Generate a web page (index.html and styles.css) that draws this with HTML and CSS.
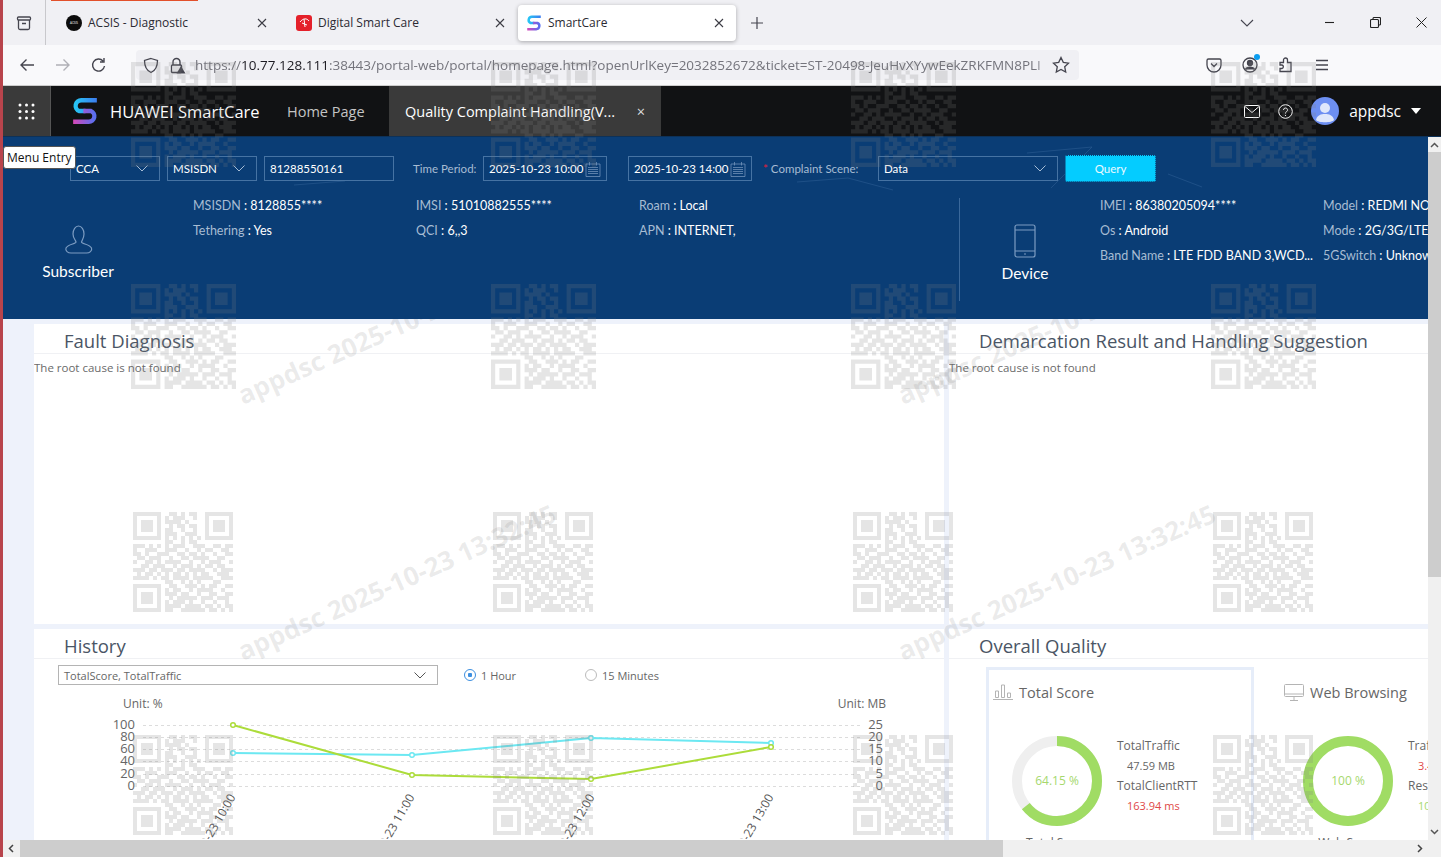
FILE: index.html
```html
<!DOCTYPE html>
<html lang="en">
<head>
    <meta charset="UTF-8">
    <meta name="viewport" content="width=device-width, initial-scale=1.0">
    <title>SmartCare</title>
    <link rel="stylesheet" href="styles.css">
</head>
<body>
<svg width="0" height="0" class="defs">
    <defs>
        <linearGradient id="logoTop" x1="0" y1="0" x2="1" y2="0"><stop offset="0" stop-color="#27c4f5"/><stop offset="1" stop-color="#3d7cf0"/></linearGradient>
        <linearGradient id="logoBottom" x1="0" y1="0" x2="1" y2="0"><stop offset="0" stop-color="#d648b8"/><stop offset="1" stop-color="#5a6ff0"/></linearGradient>
        <symbol id="logo" viewBox="0 0 26 26">
            <path d="M24 3H9.500a5.200 5.200 0 0 0-2 10l6 0" fill="none" stroke="url(#logoTop)" stroke-width="4"/>
            <path d="M2 23H16.500a5.200 5.200 0 0 0 2-10l-7 0" fill="none" stroke="url(#logoBottom)" stroke-width="4"/>
        </symbol>
        <symbol id="qr" viewBox="0 0 25 25">
            <path fill-rule="evenodd" d="M0 0h7v7H0zM1 1v5h5V1zM2 2h3v3H2zM18 0h7v7h-7zM19 1v5h5V1zM20 2h3v3h-3zM0 18h7v7H0zM1 19v5h5v-5zM2 20h3v3H2z"/>
            <path fill="none" stroke="#808080" stroke-width="1" d="M9 .5h2m1 0h1m1 0h2M8 1.500h1m1 0h3m2 0h1M8 2.500h4m1 0h1M9 3.500h1m1 0h2m1 0h2M8 4.500h2m2 0h1m2 0h1M8 5.500h3m2 0h3M8 6.500h1m1 0h1m1 0h1m1 0h1m1 0h1M8 7.500h2m2 0h1m1 0h2M0 8.500h3m1 0h1m1 0h1m1 0h1m1 0h3m2 0h3m2 0h2m1 0h2M0 9.500h1m2 0h3m2 0h3m2 0h1m2 0h1m1 0h2m2 0h2M0 10.500h2m1 0h1m2 0h3m2 0h2m1 0h2m1 0h1m2 0h1m2 0h2M1 11.500h2m1 0h3m2 0h1m2 0h2m1 0h4m2 0h2M0 12.500h1m2 0h2m1 0h1m1 0h4m2 0h1m2 0h1m1 0h3m2 0h1M2 13.500h2m1 0h3m2 0h1m1 0h3m1 0h1m1 0h2m1 0h2M0 14.500h3m1 0h2m1 0h3m1 0h2m1 0h4m2 0h1m1 0h3M1 15.500h1m1 0h2m1 0h1m1 0h1m1 0h2m1 0h1m1 0h1m1 0h2m2 0h3M0 16.500h4m1 0h1m1 0h2m1 0h4m1 0h5m2 0h3M8 17.500h2m2 0h1m1 0h1m1 0h1m3 0h2M9 18.500h2m2 0h3m1 0h1m1 0h2m2 0h2M8 19.500h1m1 0h2m2 0h1m1 0h4m2 0h1M8 20.500h3m1 0h2m2 0h1m2 0h2m2 0h2M9 21.500h1m1 0h5m1 0h3m1 0h3M8 22.500h1m1 0h3m1 0h1m2 0h1m2 0h1m2 0h1M8 23.500h4m1 0h4m1 0h2m1 0h1m1 0h2M8 24.500h2m2 0h6m1 0h2m1 0h1m1 0h1"/>
        </symbol>
    </defs>
</svg>

<div class="window">
    <!-- browser tabs -->
    <div class="tabbar">
        <span class="tab-loading"></span>
        <div class="tab-view">
            <svg width="16" height="16" viewBox="0 0 16 16" fill="none" stroke="#45454f" stroke-width="1.300"><rect x="1.500" y="2" width="13" height="3" rx="1"/><path d="M2.500 5v8a1.500 1.500 0 0 0 1.500 1.500h8a1.500 1.500 0 0 0 1.500-1.500V5M6 8.500h4"/></svg>
        </div>
        <div class="tab tab-first">
            <span class="tab-icon acsis">ACSIS</span>
            <span class="tab-title">ACSIS - Diagnostic</span>
            <svg class="tab-close" width="10" height="10" viewBox="0 0 10 10"><path d="M1 1l8 8M9 1l-8 8" stroke="#3c3c44" stroke-width="1.100"/></svg>
        </div>
        <div class="tab">
            <span class="tab-icon dsc"><svg width="11" height="11" viewBox="0 0 11 11" fill="none" stroke="#fff"><path d="M1 5c3-4 7-4 9-1M5 2l1 8M3 6l5 2"/></svg></span>
            <span class="tab-title">Digital Smart Care</span>
            <svg class="tab-close" width="10" height="10" viewBox="0 0 10 10"><path d="M1 1l8 8M9 1l-8 8" stroke="#3c3c44" stroke-width="1.100"/></svg>
        </div>
        <div class="tab tab-active">
            <svg class="tab-icon" width="16" height="16"><use href="#logo"/></svg>
            <span class="tab-title">SmartCare</span>
            <svg class="tab-close" width="10" height="10" viewBox="0 0 10 10"><path d="M1 1l8 8M9 1l-8 8" stroke="#3c3c44" stroke-width="1.100"/></svg>
        </div>
        <svg class="tab-new" width="14" height="14" viewBox="0 0 14 14"><path d="M7 1v12M1 7h12" stroke="#45454f" stroke-width="1.200"/></svg>
        <div class="window-btns">
            <svg class="tab-list" width="14" height="8" viewBox="0 0 14 8" fill="none"><path d="M1 1l6 6 6-6" stroke="#45454f" stroke-width="1.100"/></svg>
            <svg class="win-btn" width="11" height="11" viewBox="0 0 11 11"><path d="M1 5.500h9" stroke="#222" stroke-width="1.100"/></svg>
            <svg class="win-btn" width="11" height="11" viewBox="0 0 11 11" fill="none" stroke="#222" stroke-width="1.100"><rect x=".5" y="2.500" width="8" height="8" rx="1"/><path d="M3 2.500V1.500a1 1 0 0 1 1-1h5.500a1 1 0 0 1 1 1V7a1 1 0 0 1-1 1h-1"/></svg>
            <svg class="win-btn" width="11" height="11" viewBox="0 0 11 11"><path d="M.5.500l10 10M10.500.500l-10 10" stroke="#222" stroke-width="1"/></svg>
        </div>
    </div>

    <!-- address bar -->
    <div class="navbar">
        <svg class="nav-icon" width="16" height="16" viewBox="0 0 16 16" fill="none" stroke="#45454f" stroke-width="1.400"><path d="M15 8H2M7.500 2.500L2 8l5.500 5.500"/></svg>
        <svg class="nav-icon" width="16" height="16" viewBox="0 0 16 16" fill="none" stroke="#b0b0b6" stroke-width="1.400"><path d="M1 8h13M8.500 2.500L14 8l-5.500 5.500"/></svg>
        <svg class="nav-icon" width="16" height="16" viewBox="0 0 16 16" fill="none" stroke="#45454f" stroke-width="1.400"><path d="M13.500 9a6 6 0 1 1-1.500-5M13 1v4H9"/></svg>
        <div class="urlbar">
            <svg width="16" height="17" viewBox="0 0 16 17" fill="none" stroke="#45454f" stroke-width="1.300"><path d="M8 1.500L14.500 3.500c0 6-2 10-6.500 12C3.500 13.500 1.500 9.500 1.500 3.500z"/></svg>
            <svg class="url-lock" width="17" height="17" viewBox="0 0 17 17"><path d="M4 8V5a3.500 3.500 0 0 1 7 0v3" fill="none" stroke="#45454f" stroke-width="1.400"/><rect x="2.500" y="8" width="10" height="7.500" rx="1" fill="none" stroke="#45454f" stroke-width="1.400"/><path d="M12 9l4.500 7.500h-9z" fill="#45454f"/></svg>
            <span class="url-text">https://<b>10.77.128.111</b>:38443/portal-web/portal/homepage.html?openUrlKey=2032852672&amp;ticket=ST-20498-JeuHvXYywEekZRKFMN8PLI</span>
            <svg width="18" height="18" viewBox="0 0 18 18" fill="none" stroke="#45454f" stroke-width="1.300"><path d="M9 1.500l2.300 4.900 5.200.700-3.800 3.600 1 5.300L9 13.400l-4.700 2.600 1-5.300L1.500 7.100l5.200-.7z"/></svg>
        </div>
        <div class="nav-right">
            <svg width="16" height="16" viewBox="0 0 16 16" fill="none" stroke="#45454f" stroke-width="1.300"><path d="M2.500 2h11A1.500 1.500 0 0 1 15 3.500V8a7 7 0 0 1-14 0V3.500A1.500 1.500 0 0 1 2.500 2zM5 6.500l3 3 3-3"/></svg>
            <span class="nav-account">
                <svg width="16" height="16" viewBox="0 0 16 16" fill="none" stroke="#45454f" stroke-width="1.300"><circle cx="8" cy="8" r="7"/><circle cx="8" cy="6" r="2.500" fill="#45454f"/><path d="M3.500 12.500c1-3 8-3 9 0" fill="#45454f"/></svg>
                <i class="account-dot"></i>
            </span>
            <svg width="16" height="16" viewBox="0 0 16 16" fill="none" stroke="#45454f" stroke-width="1.300"><path d="M2 5.500h3.500V3a2 2 0 0 1 4 0v2.500H13v9H2v-3h2a1.800 1.800 0 0 0 0-3.500H2z"/></svg>
            <svg width="16" height="16" viewBox="0 0 16 16" fill="none" stroke="#45454f" stroke-width="1.300"><path d="M2 3.500h12M2 8h12M2 12.500h12"/></svg>
        </div>
    </div>

    <!-- portal header -->
    <div class="app-header">
        <div class="grid-btn">
            <svg width="17" height="17" viewBox="0 0 17 17" fill="#fff"><circle cx="2" cy="2" r="1.500"/><circle cx="8.500" cy="2" r="1.500"/><circle cx="15" cy="2" r="1.500"/><circle cx="2" cy="8.500" r="1.500"/><circle cx="8.500" cy="8.500" r="1.500"/><circle cx="15" cy="8.500" r="1.500"/><circle cx="2" cy="15" r="1.500"/><circle cx="8.500" cy="15" r="1.500"/><circle cx="15" cy="15" r="1.500"/></svg>
        </div>
        <svg class="app-logo" width="28" height="28"><use href="#logo"/></svg>
        <span class="app-name">HUAWEI SmartCare</span>
        <span class="app-home">Home Page</span>
        <div class="app-tab">
            <span>Quality Complaint Handling(V...</span>
            <span class="app-tab-close">×</span>
        </div>
        <div class="app-user">
            <svg width="16" height="13" viewBox="0 0 16 13" fill="none" stroke="#fff"><rect x=".5" y=".5" width="15" height="12" rx="1"/><path d="M1 1.500l7 6 7-6"/></svg>
            <svg width="15" height="15" viewBox="0 0 15 15" fill="none" stroke="#fff"><circle cx="7.500" cy="7.500" r="6.800"/><path d="M5.500 6a2 2 0 1 1 3 1.700c-.7.500-1 .8-1 1.800M7.500 11v1"/></svg>
            <span class="avatar">
                <svg width="28" height="28" viewBox="0 0 28 28" fill="#dfe7fb"><circle cx="14" cy="11" r="5"/><path d="M5 23c1-5 5-6 9-6s8 1 9 6c-2 3-16 3-18 0z"/></svg>
            </span>
            <span class="user-name">appdsc</span>
            <span class="user-caret"></span>
        </div>
    </div>

    <div class="main">
        <div class="page">
            <!-- subscriber and device summary -->
            <div class="summary">
                <svg class="summary-bg" width="1425" height="60" viewBox="0 0 1425 60" fill="none" stroke="#2c5d92" stroke-width=".6">
                    <path d="M794 45l51-4 45 12M291 48l51-4M1024 16l65-6-41 41M1165 37l34 13"/>
                </svg>
                <form class="query-row">
                    <span class="req req-first">*</span>
                    <div class="field select w-cca">CCA<svg class="chev" width="12" height="7" viewBox="0 0 12 7" fill="none"><path d="M.5.500L6 6l5.500-5.500"/></svg></div>
                    <div class="field select w-cca">MSISDN<svg class="chev" width="12" height="7" viewBox="0 0 12 7" fill="none"><path d="M.5.500L6 6l5.500-5.500"/></svg></div>
                    <div class="field w-num">81288550161</div>
                    <label class="query-label time-label">Time Period:</label>
                    <div class="field select w-date">2025-10-23 10:00<svg class="cal" width="16" height="16" viewBox="0 0 16 16" fill="none"><path d="M1 3h14v12.500H1zM4.500 1v3.500M11.500 1v3.500M3 6.500h10M3 8.500h10M3 10.500h10M3 12.500h10" stroke-dasharray="none"/></svg></div>
                    <div class="field select w-date date-second">2025-10-23 14:00<svg class="cal" width="16" height="16" viewBox="0 0 16 16" fill="none"><path d="M1 3h14v12.500H1zM4.500 1v3.500M11.500 1v3.500M3 6.500h10M3 8.500h10M3 10.500h10M3 12.500h10"/></svg></div>
                    <label class="query-label scene-label"><span class="req">*</span> Complaint Scene:</label>
                    <div class="field select w-scene">Data<svg class="chev" width="12" height="7" viewBox="0 0 12 7" fill="none"><path d="M.5.500L6 6l5.500-5.500"/></svg></div>
                    <button type="button" class="query-btn">Query</button>
                </form>

                <div class="info-row">
                    <div class="info-block subscriber">
                        <div class="info-head head-sub">
                            <svg width="32" height="32" viewBox="0 0 32 32" fill="none" stroke="#7c9cc2" stroke-width="1.200"><path d="M11 10a5.500 8 0 0 1 11 0c0 4-2 6-2.500 8 0 2 8 2 10 6 1 3-2 5-5 5H9c-3 0-6-2-5-5 2-4 10-4 10-6-.500-2-3-4-3-8z"/></svg>
                            <span>Subscriber</span>
                        </div>
                        <div class="info-grid">
                            <p><em>MSISDN</em> : 8128855****</p><p><em>IMSI</em> : 51010882555****</p><p><em>Roam</em> : Local</p>
                            <p><em>Tethering</em> : Yes</p><p><em>QCI</em> : 6,,3</p><p><em>APN</em> : INTERNET,</p>
                        </div>
                    </div>
                    <div class="info-block device">
                        <div class="info-head head-dev">
                            <svg width="22" height="34" viewBox="0 0 22 34" fill="none" stroke="#7c9cc2" stroke-width="1.200"><rect x="1" y="1" width="20" height="32" rx="2"/><path d="M1 6h20M1 27h20M10 30h2"/></svg>
                            <span>Device</span>
                        </div>
                        <div class="info-grid">
                            <p><em>IMEI</em> : 86380205094****</p><p><em>Model</em> : REDMI NOTE 13</p>
                            <p><em>Os</em> : Android</p><p><em>Mode</em> : 2G/3G/LTE</p>
                            <p><em>Band Name</em> : LTE FDD BAND 3,WCD...</p><p><em>5GSwitch</em> : Unknown</p>
                        </div>
                    </div>
                </div>
            </div>

            <!-- panels -->
            <div class="content">
                <div class="panels">
                    <section class="panel panel-top">
                        <h2>Fault Diagnosis</h2>
                        <p class="no-cause">The root cause is not found</p>
                    </section>
                    <section class="panel panel-top">
                        <h2>Demarcation Result and Handling Suggestion</h2>
                        <p class="no-cause">The root cause is not found</p>
                    </section>
                    <section class="panel">
                        <h2>History</h2>
                        <div class="history-tools">
                            <div class="history-select">TotalScore, TotalTraffic<svg width="12" height="7" viewBox="0 0 12 7" fill="none" stroke="#555"><path d="M.5.500L6 6l5.500-5.500"/></svg></div>
                            <label class="radio radio-on"><i></i>1 Hour</label>
                            <label class="radio"><i></i>15 Minutes</label>
                        </div>
                        <svg class="chart" width="910" height="160" viewBox="34 680 910 160">
                            <g class="chart-unit"><text x="123" y="709">Unit: %</text><text x="886" y="709" text-anchor="end">Unit: MB</text></g>
                            <g class="chart-grid">
                                <path d="M143 726.500h717M143 738.500h717M143 750.500h717M143 762.500h717M143 775.500h717M143 787.500h717"/>
                            </g>
                            <g class="chart-ticks" text-anchor="end">
                                <text x="135" y="730">100</text><text x="135" y="742">80</text><text x="135" y="754">60</text><text x="135" y="766">40</text><text x="135" y="779">20</text><text x="135" y="791">0</text>
                            </g>
                            <g class="chart-ticks" text-anchor="end">
                                <text x="883" y="730">25</text><text x="883" y="742">20</text><text x="883" y="754">15</text><text x="883" y="766">10</text><text x="883" y="779">5</text><text x="883" y="791">0</text>
                            </g>
                            <polyline class="line-cyan" points="233,754 412,756 591,739 771,744"/>
                            <polyline class="line-green" points="233,726 412,776 591,780 771,748"/>
                            <g class="dots-cyan"><circle cx="233" cy="754" r="2.300"/><circle cx="412" cy="756" r="2.300"/><circle cx="591" cy="739" r="2.300"/><circle cx="771" cy="744" r="2.300"/></g>
                            <g class="dots-green"><circle cx="233" cy="726" r="2.300"/><circle cx="412" cy="776" r="2.300"/><circle cx="591" cy="780" r="2.300"/><circle cx="771" cy="748" r="2.300"/></g>
                            <g class="chart-x" text-anchor="end">
                                <text transform="translate(236 798) rotate(-60)">2025-10-23 10:00</text>
                                <text transform="translate(415 798) rotate(-60)">2025-10-23 11:00</text>
                                <text transform="translate(595 798) rotate(-60)">2025-10-23 12:00</text>
                                <text transform="translate(774 798) rotate(-60)">2025-10-23 13:00</text>
                            </g>
                        </svg>
                    </section>
                    <section class="panel">
                        <h2>Overall Quality</h2>
                        <div class="quality-row">
                            <div class="quality-card card-active">
                                <div class="quality-title">
                                    <svg width="20" height="16" viewBox="0 0 20 16" fill="none" stroke="#b4b4b4"><path d="M0 15.500h20M2.500 7h3v6.500h-3zM8.500 1h3v12.500h-3zM14.500 9h3v4.500h-3z"/></svg>
                                    Total Score
                                </div>
                                <div class="quality-body">
                                    <div class="donut-wrap">
                                        <svg width="90" height="90" viewBox="0 0 90 90" fill="none"><circle cx="45" cy="45" r="40" stroke="#efefef" stroke-width="10"/><circle cx="45" cy="45" r="40" stroke="#a0dc64" stroke-width="10" stroke-dasharray="161.200 251.300" transform="rotate(-90 45 45)"/></svg>
                                        <span class="donut-value">64.15 %</span>
                                        <span class="donut-name">Total Score</span>
                                    </div>
                                    <div class="metrics">
                                        <p>TotalTraffic</p><p class="metric-val">47.59 MB</p>
                                        <p>TotalClientRTT</p><p class="metric-val metric-bad">163.94 ms</p>
                                    </div>
                                </div>
                            </div>
                            <div class="quality-card">
                                <div class="quality-title">
                                    <svg width="20" height="17" viewBox="0 0 20 17" fill="none" stroke="#b4b4b4"><rect x=".5" y=".5" width="19" height="12" rx="1"/><path d="M.5 10h19M10 13v3M6 16.500h8"/></svg>
                                    Web Browsing
                                </div>
                                <div class="quality-body">
                                    <div class="donut-wrap">
                                        <svg width="90" height="90" viewBox="0 0 90 90" fill="none"><circle cx="45" cy="45" r="40" stroke="#a0dc64" stroke-width="10"/></svg>
                                        <span class="donut-value">100 %</span>
                                        <span class="donut-name">Web Score</span>
                                    </div>
                                    <div class="metrics">
                                        <p>Traffic</p><p class="metric-val metric-bad">3.41 MB</p>
                                        <p>Response</p><p class="metric-val metric-good">10 ms</p>
                                    </div>
                                </div>
                            </div>
                        </div>
                    </section>
                </div>
                <svg class="stamp" width="1425" height="520" viewBox="0 320 1425 520">
                    <text transform="translate(240 406) rotate(-24)">appdsc 2025-10-23 13:32:45</text>
                    <text transform="translate(900 406) rotate(-24)">appdsc 2025-10-23 13:32:45</text>
                    <text transform="translate(240 662) rotate(-24)">appdsc 2025-10-23 13:32:45</text>
                    <text transform="translate(900 662) rotate(-24)">appdsc 2025-10-23 13:32:45</text>
                </svg>
            </div>
        </div>
        <div class="vscroll">
            <svg width="9" height="6" viewBox="0 0 9 6" fill="none"><path d="M1 5l3.500-3.500L8 5" stroke="#555" stroke-width="1.500"/></svg>
            <div class="vthumb"></div>
            <svg width="9" height="6" viewBox="0 0 9 6" fill="none"><path d="M1 1l3.500 3.500L8 1" stroke="#555" stroke-width="1.500"/></svg>
        </div>
    </div>
    <div class="hscroll">
        <svg width="6" height="9" viewBox="0 0 6 9" fill="none"><path d="M5 1L1.500 4.500 5 8" stroke="#444" stroke-width="1.500"/></svg>
        <div class="hthumb"></div>
        <svg width="6" height="9" viewBox="0 0 6 9" fill="none"><path d="M1 1l3.500 3.500L1 8" stroke="#444" stroke-width="1.500"/></svg>
    </div>
</div>

<!-- account watermark across the whole window -->
<svg class="qr-layer" width="1441" height="857" viewBox="0 0 1441 857">
    <use href="#qr" x="130" y="62" width="107" height="105"/><use href="#qr" x="490" y="62" width="107" height="105"/><use href="#qr" x="850" y="62" width="107" height="105"/><use href="#qr" x="1210" y="62" width="107" height="105"/>
    <use href="#qr" x="130" y="284" width="107" height="105"/><use href="#qr" x="490" y="284" width="107" height="105"/><use href="#qr" x="850" y="284" width="107" height="105"/><use href="#qr" x="1210" y="284" width="107" height="105"/>
    <use href="#qr" x="133" y="512" width="100" height="100"/><use href="#qr" x="493" y="512" width="100" height="100"/><use href="#qr" x="853" y="512" width="100" height="100"/><use href="#qr" x="1213" y="512" width="100" height="100"/>
    <use href="#qr" x="133" y="735" width="100" height="100"/><use href="#qr" x="493" y="735" width="100" height="100"/><use href="#qr" x="853" y="735" width="100" height="100"/><use href="#qr" x="1213" y="735" width="100" height="100"/>
</svg>

<div class="menu-tip">Menu Entry</div>
</body>
</html>
```

FILE: styles.css
```css
/* Base */
html, body {
    margin: 0;
    padding: 0;
    height: 857px;
    overflow: hidden;
    background: #fff;
    font-family: "Open Sans", "Noto Sans", sans-serif;
}

p, h2 {
    margin: 0;
}

.defs {
    position: absolute;
}

.window {
    display: flex;
    flex-direction: column;
    height: 857px;
    border-left: 3px solid #b8444c;
    box-sizing: border-box;
}

/* Browser tabs */
.tabbar {
    position: relative;
    display: flex;
    align-items: center;
    height: 45px;
    background: #f0f0f4;
    flex-shrink: 0;
}

.tab-loading {
    position: absolute;
    left: 48px;
    top: 0;
    width: 147px;
    height: 1px;
    background: #e2502b;
}

.tab-view {
    display: flex;
    align-items: center;
    justify-content: center;
    width: 42px;
    height: 45px;
    border-right: 1px solid #c8c8cc;
    box-sizing: content-box;
}

.tab {
    display: flex;
    align-items: center;
    gap: 6px;
    width: 209px;
    height: 36px;
    margin-left: 16px;
    padding: 0 12px 0 12px;
    box-sizing: content-box;
    margin-right: -11px;
    font-size: 12px;
    color: #2b2a33;
}

.tab-first {
    margin-left: 0;
    padding-left: 20px;
    width: 201px;
}

.tab-active {
    background: #fff;
    border-radius: 4px;
    box-shadow: 0 1px 4px rgba(0, 0, 0, .3);
    width: 198px;
    padding: 0 12px 0 8px;
    margin-right: 0;
    margin-left: 12px;
}

.tab-icon {
    display: flex;
    align-items: center;
    justify-content: center;
    width: 16px;
    height: 16px;
    flex-shrink: 0;
}

.acsis {
    border-radius: 50%;
    background: #0c0c0c;
    color: #fff;
    font-size: 3px;
}

.dsc {
    border-radius: 3px;
    background: #e4202a;
}

.tab-title {
    flex: 1;
}

.tab-new {
    margin-left: 14px;
}

.window-btns {
    display: flex;
    align-items: center;
    margin-left: auto;
}

.tab-list {
    margin-right: 70px;
}

.win-btn {
    margin-right: 35px;
}

.win-btn:last-child {
    margin-right: 14px;
}

/* Address bar */
.navbar {
    display: flex;
    align-items: center;
    height: 41px;
    padding-left: 16px;
    background: #f9f9fb;
    border-bottom: 1px solid #ccc;
    box-sizing: border-box;
    flex-shrink: 0;
}

.nav-icon {
    margin-right: 20px;
}

.urlbar {
    display: flex;
    align-items: center;
    width: 943px;
    height: 30px;
    margin-left: 9px;
    padding: 0 7px;
    background: #f0f0f4;
    border-radius: 4px;
    box-sizing: border-box;
}

.urlbar svg:first-child {
    margin-right: 10px;
}

.url-lock {
    margin-right: 9px;
}

.url-text {
    width: 857px;
    overflow: hidden;
    white-space: nowrap;
    font-size: 13.500px;
    color: #74747c;
    margin-right: 0;
    -webkit-mask-image: linear-gradient(90deg, #000 98%, transparent);
}

.url-text b {
    font-weight: 400;
    color: #1c1b22;
}

.nav-right {
    display: flex;
    align-items: center;
    gap: 20px;
    margin-left: 127px;
}

.nav-account {
    position: relative;
    display: flex;
}

.account-dot {
    position: absolute;
    top: -3px;
    right: -2px;
    width: 6px;
    height: 6px;
    background: #0a9df0;
    border-radius: 50%;
}

/* Portal header */
.app-header {
    display: flex;
    align-items: center;
    height: 51px;
    background: #111214;
    border-bottom: 1px solid #0d3158;
    box-sizing: border-box;
    flex-shrink: 0;
    color: #fff;
}

.grid-btn {
    display: flex;
    align-items: center;
    justify-content: center;
    width: 47px;
    height: 100%;
    background: #3a3a3a;
    border-right: 1px solid #555;
}

.app-logo {
    margin-left: 20px;
}

.app-name {
    margin-left: 11px;
    font-size: 16.500px;
    width: 177px;
    white-space: nowrap;
}

.app-home {
    font-size: 14.500px;
    color: #c4c4c4;
    width: 102px;
}

.app-tab {
    display: flex;
    align-items: center;
    justify-content: space-between;
    width: 272px;
    height: 100%;
    padding: 0 16px;
    box-sizing: border-box;
    background: #3a3a3a;
    font-size: 14.500px;
}

.app-tab-close {
    color: #ddd;
}

.app-user {
    display: flex;
    align-items: center;
    margin-left: auto;
    padding-right: 20px;
    gap: 18px;
}

.avatar {
    display: flex;
    width: 28px;
    height: 28px;
    background: #6d8ff2;
    border-radius: 50%;
    overflow: hidden;
    margin-left: 0;
}

.user-name {
    font-size: 15.500px;
    margin-left: -8px;
    margin-right: -8px;
}

.user-caret {
    width: 0;
    height: 0;
    border: 5px solid transparent;
    border-top: 6px solid #fff;
    border-bottom: 0;
}

/* Page */
.main {
    display: flex;
    flex: 1;
    min-height: 0;
}

.page {
    flex: 1;
    min-width: 0;
    display: flex;
    flex-direction: column;
    overflow: hidden;
}

.summary {
    position: relative;
    height: 182px;
    background: #0a3d75;
    color: #fff;
    flex-shrink: 0;
    font-family: Lato, "Open Sans", sans-serif;
}

.summary-bg {
    position: absolute;
    left: 0;
    top: 0;
}

.query-row {
    position: relative;
    display: flex;
    align-items: center;
    height: 25px;
    padding: 19px 0 0 53px;
    font-size: 11.500px;
}

.req {
    color: #e0203a;
}

.req-first {
    width: 14px;
}

.field {
    display: flex;
    align-items: center;
    height: 25px;
    padding: 0 5px;
    margin-right: 7px;
    border: 1px solid #4673a3;
    box-sizing: border-box;
}

.select {
    justify-content: space-between;
}

.chev {
    stroke: #a6bdd6;
    margin-right: 6px;
}

.cal {
    stroke: #7c9cc2;
    stroke-width: .7;
}

.w-cca {
    width: 90px;
}

.w-num {
    width: 130px;
    margin-right: 19px;
}

.w-date {
    width: 124px;
    margin-right: 21px;
}

.date-second {
    margin-right: 11px;
}

.w-scene {
    width: 180px;
}

.query-label {
    color: #a7bcd3;
    white-space: nowrap;
}

.time-label {
    width: 70px;
}

.scene-label {
    width: 115px;
}

.query-btn {
    width: 91px;
    height: 27px;
    border: 1px dotted #0a3d75;
    background: #04ccff;
    color: #eafaff;
    font-family: inherit;
    font-size: 11.500px;
    border-radius: 2px;
}

.info-row {
    position: relative;
    display: flex;
    margin-top: 17px;
}

.info-block {
    display: flex;
    height: 103px;
}

.subscriber {
    width: 956px;
    border-right: 1px solid #3a689b;
}

.device {
    flex: 1;
    min-width: 0;
    overflow: hidden;
}

.info-head {
    display: flex;
    flex-direction: column;
    align-items: center;
    gap: 6px;
    padding-top: 26px;
    font-size: 15.500px;
    flex-shrink: 0;
}

.head-sub {
    width: 190px;
    padding-right: 40px;
    box-sizing: border-box;
}

.head-dev {
    width: 140px;
    padding-top: 26px;
    padding-right: 10px;
    box-sizing: border-box;
}

.info-grid {
    display: grid;
    grid-template-columns: repeat(3, 223px);
    grid-auto-rows: 25px;
    align-content: start;
    font-size: 12.500px;
    white-space: nowrap;
}

.device .info-grid {
    grid-template-columns: repeat(2, 223px);
}

.info-grid em {
    font-style: normal;
    color: #a7bcd3;
}

/* Panels */
.content {
    position: relative;
    flex: 1;
    min-height: 0;
    overflow: hidden;
    background: #eef2fb;
}

.panels {
    display: grid;
    grid-template-columns: 910px 560px;
    grid-template-rows: 300px 300px;
    gap: 5px;
    padding: 5px 0 0 31px;
}

.panel {
    background: #fff;
    overflow: hidden;
}

.panel h2 {
    height: 29px;
    padding-left: 30px;
    font-size: 18.500px;
    font-weight: 400;
    line-height: 33px;
    color: #4a5565;
    border-bottom: 1px solid #f0f1f4;
    box-sizing: content-box;
}

.no-cause {
    margin-top: 6px;
    font-size: 11.500px;
    color: #6a6a6a;
}

.history-tools {
    display: flex;
    align-items: center;
    height: 20px;
    margin: 6px 0 0 24px;
    font-size: 11px;
    color: #666;
}

.history-select {
    display: flex;
    align-items: center;
    justify-content: space-between;
    width: 380px;
    height: 20px;
    padding: 0 11px 0 5px;
    margin-right: 26px;
    border: 1px solid #b4b4b4;
    box-sizing: border-box;
}

.radio {
    display: flex;
    align-items: center;
    gap: 5px;
    width: 121px;
}

.radio i {
    width: 12px;
    height: 12px;
    border: 1px solid #bbb;
    border-radius: 50%;
    box-sizing: border-box;
}

.radio-on i {
    border-color: #3d8fe0;
    background: radial-gradient(circle, #3d8fe0 0 2px, #fff 2.500px);
}

.chart {
    display: block;
    margin-top: -6px;
}

.chart-unit text, .chart-ticks text {
    font-size: 12px;
    fill: #666;
}

.chart-ticks text {
    font-size: 13px;
}

.chart-grid path {
    stroke: #dcdcdc;
    stroke-dasharray: 3 3;
    fill: none;
}

.line-cyan, .line-green {
    fill: none;
    stroke-width: 2;
}

.line-cyan {
    stroke: #6ce8f2;
}

.line-green {
    stroke: #acdc3a;
}

.dots-cyan circle, .dots-green circle {
    fill: #fff;
    stroke-width: 1.500;
}

.dots-cyan circle {
    stroke: #6ce8f2;
}

.dots-green circle {
    stroke: #acdc3a;
}

.chart-x text {
    font-size: 12px;
    fill: #555;
}

/* Quality cards */
.quality-row {
    display: flex;
    padding: 8px 0 0 37px;
}

.quality-card {
    width: 256px;
    height: 200px;
    flex-shrink: 0;
    padding: 0 3px;
    border: 3px solid transparent;
    margin-right: 20px;
}

.card-active {
    border-color: #e6edf9;
    margin-right: 23px;
}

.quality-title {
    display: flex;
    align-items: center;
    gap: 6px;
    height: 44px;
    padding-left: 1px;
    font-size: 14.500px;
    color: #666;
}

.quality-body {
    display: flex;
    padding: 22px 0 0 20px;
}

.donut-wrap {
    position: relative;
    width: 90px;
    height: 112px;
    text-align: center;
    margin-right: 15px;
}

.donut-wrap svg {
    display: block;
}

.donut-value {
    position: absolute;
    left: 0;
    right: 0;
    top: 36px;
    font-size: 12px;
    color: #a6d86e;
}

.donut-name {
    position: absolute;
    left: 0;
    right: 0;
    top: 98px;
    font-size: 12px;
    color: #666;
}

.metrics {
    font-size: 12px;
    color: #666;
    white-space: nowrap;
    padding-top: 0;
}

.metrics p {
    height: 20px;
    line-height: 20px;
}

.metric-val {
    padding-left: 10px;
    font-size: 11px;
}

.metric-bad {
    color: #e04848;
}

.metric-good {
    color: #a6d86e;
}

.stamp {
    position: absolute;
    left: 0;
    top: 0;
    pointer-events: none;
}

.stamp text {
    font-size: 26px;
    font-weight: 700;
    font-family: "Open Sans", sans-serif;
    fill: rgba(128, 128, 128, .16);
}

/* Scrollbars */
.vscroll {
    display: flex;
    flex-direction: column;
    align-items: center;
    justify-content: space-between;
    width: 13px;
    padding: 5px 0;
    box-sizing: border-box;
    background: #f0f0f0;
    flex-shrink: 0;
}

.vthumb {
    width: 100%;
    height: 425px;
    margin-bottom: auto;
    margin-top: 4px;
    background: #cdcdcd;
}

.hscroll {
    display: flex;
    align-items: center;
    justify-content: space-between;
    height: 17px;
    padding: 0 18px 0 5px;
    background: #f0f0f0;
    flex-shrink: 0;
    box-sizing: border-box;
}

.hthumb {
    width: 983px;
    height: 100%;
    margin-left: 6px;
    margin-right: auto;
    background: #cdcdcd;
}

/* Overlays */
.qr-layer {
    position: absolute;
    left: 0;
    top: 0;
    pointer-events: none;
}

.qr-layer use {
    fill: #808080;
    opacity: .2;
}

.menu-tip {
    position: absolute;
    left: 3px;
    top: 146px;
    padding: 0 3px;
    height: 21px;
    line-height: 21px;
    background: #fff;
    border: 1px solid #555;
    border-radius: 3px;
    font-size: 12px;
    color: #111;
}
```
